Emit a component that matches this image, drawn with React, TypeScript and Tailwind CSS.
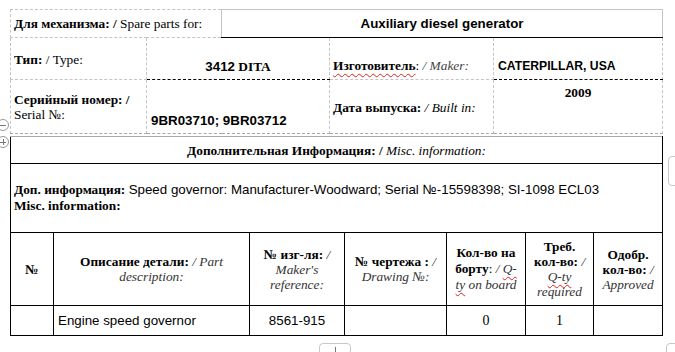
import React from 'react';

const serif = 'font-["Liberation_Serif","Times_New_Roman",serif]';
const sans = 'font-["Liberation_Sans",Arial,sans-serif]';

// Word-style spell-check squiggle
const Squiggle: React.FC<{ children: React.ReactNode }> = ({ children }) => (
  <span className="underline decoration-wavy decoration-[#e02020] decoration-1 underline-offset-[3px]">
    {children}
  </span>
);

const dash = 'border border-dashed border-[#c4c4c4]';

const SpecHeader: React.FC = () => (
  <table className={`table-fixed border-collapse ml-[10px] mt-[9px] w-[652px] text-[13.33px] leading-[15px] text-black ${serif}`}>
    <colgroup>
      <col className="w-[136px]" />
      <col className="w-[75px]" />
      <col className="w-[108px]" />
      <col className="w-[164px]" />
      <col className="w-[169px]" />
    </colgroup>
    <tbody>
      <tr className="h-[28px]">
        <td colSpan={2} className={`${dash} align-top pt-[6px] pl-[3px]`}>
          <b>Для механизма: /</b> Spare parts for:
        </td>
        <td colSpan={3} className={`${dash} border-b border-b-black border-solid align-top pt-[6px] text-center`}>
          <span className={`${sans} font-bold`}>Auxiliary diesel generator</span>
        </td>
      </tr>
      <tr className="h-[42px]">
        <td className={`${dash} align-top pt-[14px] pl-[3px]`}>
          <b>Тип:</b> / Type:
        </td>
        <td colSpan={2} className={`${dash} !border-b-black !border-b-solid align-top pt-[21px] text-center font-bold`}>
          <span className={sans}>3412</span> DITA
        </td>
        <td className={`${dash} align-top pt-[20px] pl-[3px]`}>
          <b>
            <Squiggle>Изготовитель</Squiggle>
          </b>
          : <i className="text-[#444]">/ Maker:</i>
        </td>
        <td className={`${dash} !border-b-black !border-b-solid align-top pt-[20px] pl-[4px]`}>
          <span className={`${sans} font-bold text-[12.2px]`}>CATERPILLAR, USA</span>
        </td>
      </tr>
      <tr className="h-[54px]">
        <td className={`${dash} !border-b-[#a8a8a8] !border-b-solid align-top pt-[12px] pl-[3px]`}>
          <b>Серийный номер: /</b>
          <br />
          Serial №:
        </td>
        <td colSpan={2} className={`${dash} !border-b-[#a8a8a8] !border-b-solid align-top pt-[33px] pl-[4px]`}>
          <span className={`${sans} font-bold`}>9BR03710; 9BR03712</span>
        </td>
        <td className={`${dash} !border-b-[#a8a8a8] !border-b-solid align-top pt-[20px] pl-[3px]`}>
          <b>Дата выпуска:</b> <i>/ Built in:</i>
        </td>
        <td className={`${dash} !border-b-[#a8a8a8] !border-b-solid align-top pt-[5px] text-center font-bold`}>
          2009
        </td>
      </tr>
    </tbody>
  </table>
);

const cell = 'border border-black';

const PartsTable: React.FC = () => (
  <table className={`table-fixed border-collapse ml-[10px] mt-[2px] w-[652px] text-[13.33px] leading-[15px] text-black ${serif}`}>
    <colgroup>
      <col className="w-[43px]" />
      <col className="w-[196px]" />
      <col className="w-[95px]" />
      <col className="w-[102px]" />
      <col className="w-[79px]" />
      <col className="w-[68px]" />
      <col className="w-[69px]" />
    </colgroup>
    <tbody>
      <tr className="h-[27px]">
        <td colSpan={7} className={`${cell} !border-t-[#a8a8a8] align-middle text-center`}>
          <b>Дополнительная Информация: /</b> <i>Misc. information:</i>
        </td>
      </tr>
      <tr className="h-[69px]">
        <td colSpan={7} className={`${cell} align-top pt-[18px] pl-[3px] leading-[16px]`}>
          <b>Доп. информация:</b>{' '}
          <span className={sans}>Speed governor: Manufacturer-Woodward; Serial №-15598398; SI-1098 ECL03</span>
          <br />
          <b>Misc. information:</b>
        </td>
      </tr>
      <tr className="h-[73px] text-center">
        <td className={`${cell} font-bold`}>№</td>
        <td className={cell}>
          <b>Описание детали:</b> <i className="text-[#333]">/ Part</i>
          <br />
          <i className="text-[#333]">description:</i>
        </td>
        <td className={cell}>
          <b>№ изг-ля:</b> <i className="text-[#333]">/</i>
          <br />
          <i className="text-[#333]">Maker's</i>
          <br />
          <i className="text-[#333]">reference:</i>
        </td>
        <td className={cell}>
          <b>№ чертежа :</b> <i className="text-[#333]">/</i>
          <br />
          <i className="text-[#333]">Drawing №:</i>
        </td>
        <td className={`${cell} leading-[16px]`}>
          <b>Кол-во на</b>
          <br />
          <b>борту</b>: <i className="text-[#333]">/ <Squiggle>Q-</Squiggle></i>
          <br />
          <i className="text-[#333]">
            <Squiggle>ty</Squiggle> on board
          </i>
        </td>
        <td className={cell}>
          <b>Треб.</b>
          <br />
          <b>кол-во:</b> <i className="text-[#333]">/</i>
          <br />
          <i className="text-[#333]">
            <Squiggle>Q-ty</Squiggle>
          </i>
          <br />
          <i className="text-[#333]">required</i>
        </td>
        <td className={cell}>
          <b>Одобр.</b>
          <br />
          <b>кол-во:</b> <i className="text-[#333]">/</i>
          <br />
          <i className="text-[#333]">Approved</i>
        </td>
      </tr>
      <tr className="h-[30px]">
        <td className={cell} />
        <td className={`${cell} pl-[4px] ${sans}`}>Engine speed governor</td>
        <td className={`${cell} text-center ${sans}`}>8561-915</td>
        <td className={cell} />
        <td className={`${cell} text-center font-normal text-black text-[14px]`}>0</td>
        <td className={`${cell} text-center font-normal text-black text-[14px]`}>1</td>
        <td className={cell} />
      </tr>
    </tbody>
  </table>
);

const App: React.FC = () => (
  <div className="relative w-[675px] h-[352px] overflow-hidden bg-white">
    <SpecHeader />
    <PartsTable />

    {/* table collapse / expand handles */}
    <div className="absolute left-[-3px] top-[119px] w-[12px] h-[12px] rounded-full border border-[#9a9a9a] bg-white flex items-center justify-center">
      <div className="w-[6px] h-px bg-[#777]" />
    </div>
    <div className="absolute left-[-3px] top-[136px] w-[12px] h-[12px] rounded-full border border-[#9a9a9a] bg-white flex items-center justify-center">
      <div className="relative w-[6px] h-px bg-[#777]">
        <div className="absolute left-[2.5px] top-[-2.5px] w-px h-[6px] bg-[#777]" />
      </div>
    </div>

    {/* edge tabs */}
    <div className="absolute left-[668px] top-[156px] w-[20px] h-[30px] rounded-tl-[4px] rounded-bl-[4px] border border-[#c8c8c8] bg-white" />
    <div className="absolute left-[319px] top-[343px] w-[32px] h-[20px] rounded-t-[4px] border border-[#c8c8c8] bg-white">
      <div className="mx-auto mt-[3px] w-px h-[5px] bg-[#777]" />
    </div>
    <div className="absolute left-[666px] top-[343px] w-[20px] h-[20px] rounded-tl-[4px] border border-[#c8c8c8] bg-white" />
  </div>
);

export default App;
